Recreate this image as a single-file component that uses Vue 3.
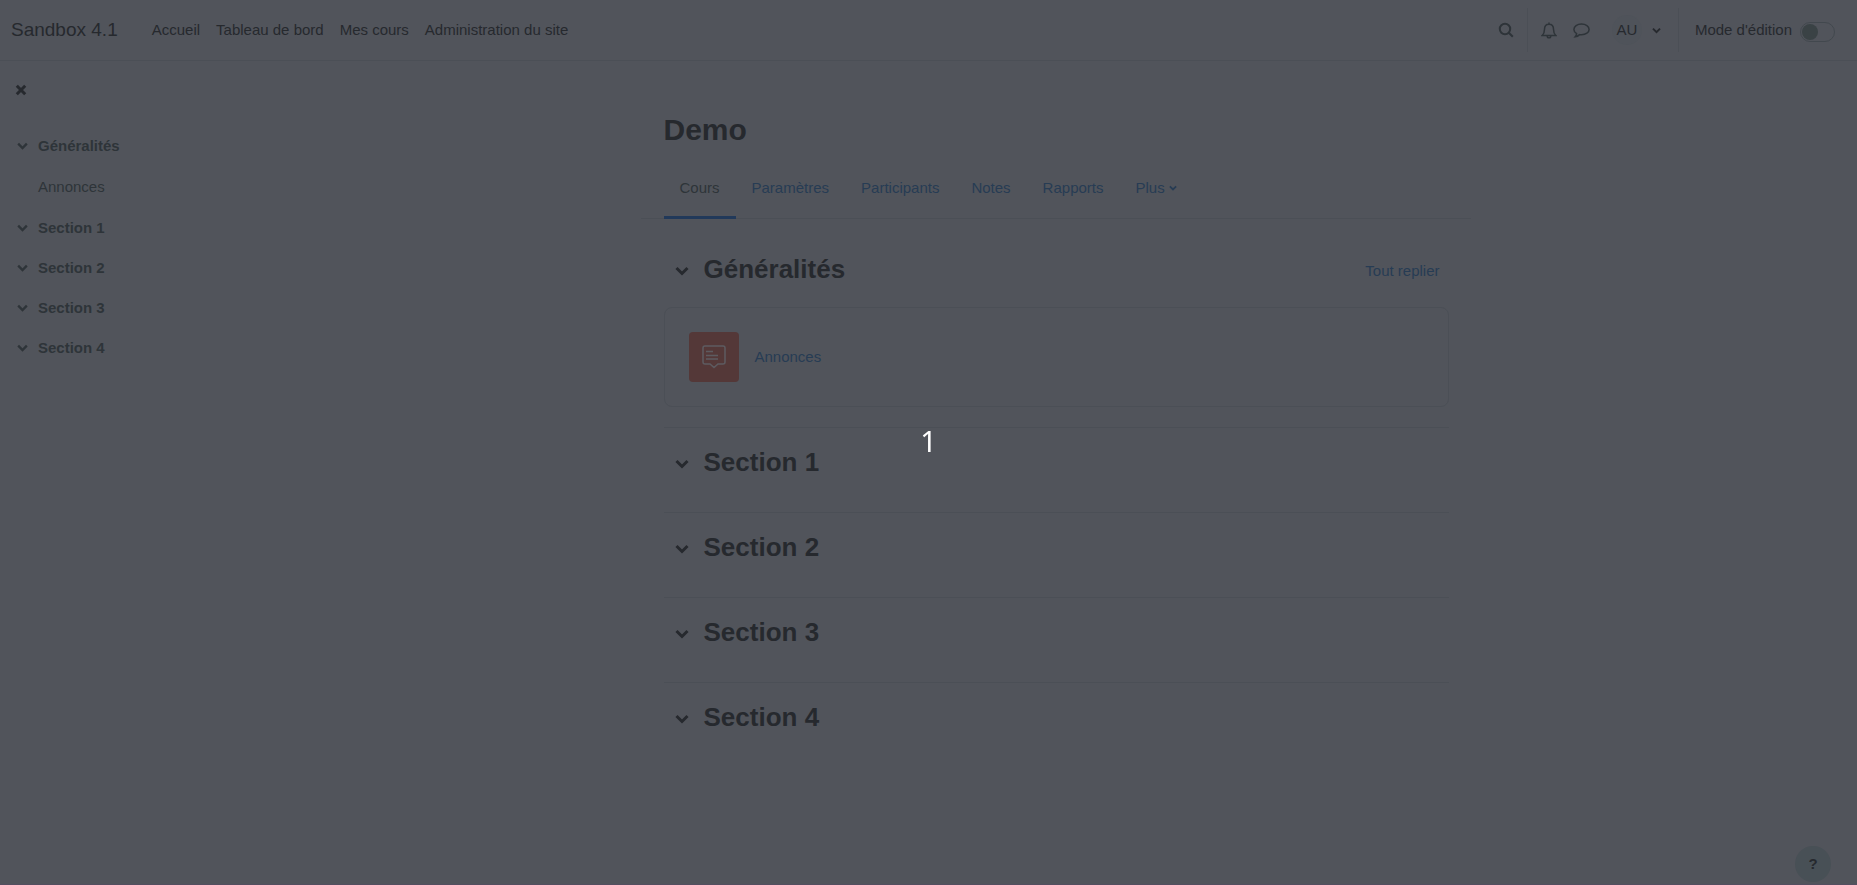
<script setup>
import { ref } from 'vue'

const nav = ['Accueil', 'Tableau de bord', 'Mes cours', 'Administration du site']
const tabs = ['Cours', 'Paramètres', 'Participants', 'Notes', 'Rapports']
const sections = [
  { title: 'Généralités', activities: ['Annonces'] },
  { title: 'Section 1', activities: [] },
  { title: 'Section 2', activities: [] },
  { title: 'Section 3', activities: [] },
  { title: 'Section 4', activities: [] },
]
const editing = ref(false)
const count = ref(1)
</script>

<template>
  <div class="page">
    <header class="topbar">
      <a class="brand" href="#">Sandbox 4.1</a>
      <nav class="nav">
        <a v-for="item in nav" :key="item" href="#">{{ item }}</a>
      </nav>
      <div class="tools">
        <button class="search" aria-label="Rechercher">
          <svg width="16" height="16" viewBox="0 0 16 16"><circle cx="7" cy="7" r="5.2" /><path d="M10.800 10.800 14.800 14.800" /></svg>
        </button>
        <div class="alerts">
          <button aria-label="Notifications">
            <svg class="thin" width="16" height="17" viewBox="0 0 16 17"><path d="M8 .5v1.700M1.200 13.500C3.200 11.600 3.500 9.800 3.500 7.200 3.500 4.200 5.200 2.200 8 2.200s4.500 2 4.500 5c0 2.600.3 4.400 2.300 6.300zM6.200 14a1.800 1.800 0 0 0 3.600 0" /></svg>
          </button>
          <button aria-label="Messages">
            <svg class="thin" width="17" height="15" viewBox="0 0 17 15"><path d="M8.500 1c4.300 0 7.600 2.400 7.600 5.400s-3.300 5.400-7.600 5.400c-.7 0-1.300 0-1.900-.2-1.300 1.300-2.600 2-4.400 2.200.8-.9 1.300-1.800 1.400-3.200C1.900 9.600.9 8.100.9 6.400.9 3.400 4.200 1 8.500 1z" /></svg>
          </button>
        </div>
        <button class="user"><span class="avatar">AU</span>
          <svg class="chevron" width="9" height="7" viewBox="0 0 14 10"><path d="M1.500 2 7 7.500 12.500 2" /></svg>
        </button>
        <label class="edit">Mode d'édition
          <input v-model="editing" type="checkbox" role="switch">
        </label>
      </div>
    </header>

    <div class="body">
      <aside class="drawer">
        <button class="close" aria-label="Fermer">
          <svg width="12" height="12" viewBox="0 0 12 12"><path d="M1.800 1.800 10.200 10.200M10.200 1.800 1.800 10.200" /></svg>
        </button>
        <template v-for="s in sections" :key="s.title">
          <div class="index-row">
            <button :aria-label="s.title">
              <svg class="chevron" width="11" height="8" viewBox="0 0 14 10"><path d="M1.500 2 7 7.500 12.500 2" /></svg>
            </button>
            <a href="#">{{ s.title }}</a>
          </div>
          <div v-for="a in s.activities" :key="a" class="index-row sub"><a href="#">{{ a }}</a></div>
        </template>
      </aside>

      <main class="main">
        <h1>Demo</h1>
        <nav class="tabs">
          <a v-for="(t, i) in tabs" :key="t" href="#" :class="{ active: i === 0 }">{{ t }}</a>
          <button>Plus
            <svg class="chevron" width="8" height="6" viewBox="0 0 14 10"><path d="M1.500 2 7 7.500 12.500 2" /></svg>
          </button>
        </nav>
        <div class="sections">
          <section v-for="(s, i) in sections" :key="s.title" class="section">
            <div class="section-head">
              <button class="toggle" :aria-label="s.title">
                <svg class="chevron" width="14" height="10" viewBox="0 0 14 10"><path d="M1.500 2 7 7.500 12.500 2" /></svg>
              </button>
              <h2>{{ s.title }}</h2>
              <a v-if="i === 0" class="collapse" href="#">Tout replier</a>
            </div>
            <div v-for="a in s.activities" :key="a" class="card">
              <span class="activity-icon">
                <svg width="24" height="24" viewBox="0 0 24 24"><path d="M3 1h18a2 2 0 0 1 2 2v14a2 2 0 0 1-2 2h-5L12 22.500 8 19H3a2 2 0 0 1-2-2V3a2 2 0 0 1 2-2zM4 6.500h7M4 10.500h12M4 14h12" /></svg>
              </span>
              <a href="#">{{ a }}</a>
            </div>
          </section>
        </div>
      </main>
    </div>

    <button class="help" aria-label="Aide">?</button>
    <div class="countdown">{{ count }}</div>
  </div>
</template>

<style>
body {
  background: #51545b;
}
</style>

<style scoped>
.page {
  --ink: #26292e;
  --soft: #2e3439;
  --link: #273c54;
  --line: #4b4f56;
  min-height: 100vh;
  border-bottom: 1px solid #544e60;
  background: #51545b;
  color: var(--ink);
  font: 15px/22px "Liberation Sans", Arial, sans-serif;
}
.page *, .page { box-sizing: border-box; }
a { color: inherit; text-decoration: none; }
button { padding: 0; border: 0; background: none; color: inherit; font: inherit; }
svg { display: block; fill: none; stroke: currentColor; stroke-width: 2; }
.chevron { stroke-width: 3; }
.thin { stroke-width: 1.5; }

.topbar {
  display: flex;
  align-items: center;
  height: 61px;
  padding: 0 22px 0 11px;
  border-bottom: 1px solid var(--line);
}
.brand { margin-right: 34px; font-size: 19px; }
.nav { display: flex; gap: 16px; }
.tools { display: flex; align-items: center; height: 44px; margin-left: auto; color: var(--soft); }
.search { padding-right: 13px; }
.alerts { display: flex; align-items: center; gap: 16px; height: 100%; padding-left: 13px; border-left: 1px solid var(--line); }
.user { display: flex; align-items: center; gap: 10px; height: 100%; margin-left: 22px; padding-right: 17px; border-right: 1px solid var(--line); color: var(--ink); }
.avatar { width: 30px; border-radius: 15px; background: #4f535a; line-height: 30px; text-align: center; }
.edit { display: flex; align-items: center; gap: 8px; margin-left: 16px; color: var(--ink); }
.edit input {
  display: flex;
  align-items: center;
  appearance: none;
  width: 35px;
  height: 20px;
  margin: 3px 0 0;
  padding: 0 1px;
  border: 1px solid #42484e;
  border-radius: 10px;
}
.edit input::before { content: ""; width: 16px; height: 16px; border-radius: 8px; background: #3a4245; }
.edit input:checked { justify-content: flex-end; }

.body { display: flex; padding-right: 31px; }
.drawer { flex: 0 0 285px; padding: 23px 15px; color: var(--soft); }
.close { display: block; margin-bottom: 30px; color: var(--ink); }
.close svg { stroke-width: 3; }
.index-row { display: flex; align-items: center; gap: 10px; height: 40px; padding-left: 2px; font-weight: bold; }
.index-row.sub { height: 42px; padding-left: 23px; font-weight: normal; }

.main { flex: 1; max-width: 830px; margin: 0 auto; padding-top: 50px; }
h1, h2 { margin: 0; }
h1 { padding: 0 23px; font-size: 30px; line-height: 38px; }
.tabs { display: flex; height: 60px; margin-top: 10px; padding: 0 23px; border-bottom: 1px solid var(--line); color: var(--link); }
.tabs a, .tabs button { display: flex; align-items: center; gap: 4px; height: 60px; padding: 0 16px; border-bottom: 3px solid transparent; }
.tabs .active { border-bottom-color: #21395a; color: var(--soft); }
.sections { padding: 16px 22px 0 23px; }
.section { padding-bottom: 20px; }
.section + .section { height: 85px; padding: 0; border-top: 1px solid var(--line); }
.section-head { display: flex; align-items: center; height: 67px; padding: 0 9px 0 11px; }
.section-head .toggle { margin-right: 15px; padding-top: 4px; }
h2 { font-size: 26px; line-height: 32px; }
.collapse { margin-left: auto; padding-top: 4px; color: var(--link); }
.card { display: flex; align-items: center; gap: 16px; height: 100px; margin-top: 5px; padding: 0 24px; border: 1px solid var(--line); border-radius: 8px; color: var(--link); }
.activity-icon { display: grid; place-items: center; width: 50px; height: 50px; border-radius: 4px; background: #543838; color: #5d5b60; }
.activity-icon svg { stroke-width: 1.5; }

.help { position: fixed; right: 26px; bottom: 3px; width: 36px; height: 36px; border-radius: 18px; background: #485056; font-weight: bold; }
.countdown {
  position: fixed;
  inset: 0;
  display: grid;
  place-items: center;
  color: #fff;
  font: 29px/40px "Noto Sans", sans-serif;
  padding-bottom: 3px;
  pointer-events: none;
}
</style>
